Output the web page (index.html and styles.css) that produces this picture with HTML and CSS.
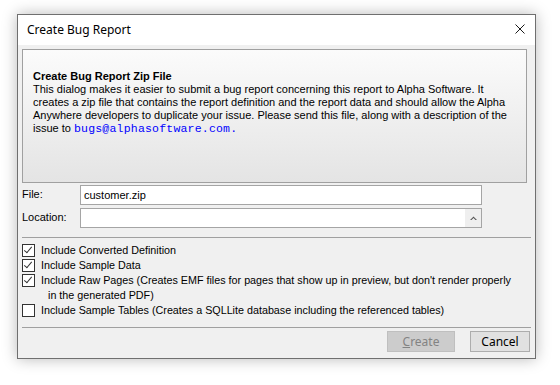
FILE: index.html
```html
<!DOCTYPE html>
<html lang="en">

<head>
  <meta charset="UTF-8">
  <title>Create Bug Report</title>
  <link rel="stylesheet" href="styles.css">
</head>

<body>
  <div class="dialog">
    <header class="titlebar">
      <span class="title">Create Bug Report</span>
      <button class="close-btn" aria-label="Close">
        <svg width="10" height="10" viewBox="0 0 10 10">
          <path d="M0.5 0.5 L9.5 9.5 M9.5 0.5 L0.5 9.5" stroke="#1a1a1a" stroke-width="1" fill="none" />
        </svg>
      </button>
    </header>

    <div class="content">
      <section class="info-panel">
        <h1 class="info-title">Create Bug Report Zip File</h1>
        <p class="info-text">
          This dialog makes it easier to submit a bug report concerning this report to Alpha Software. It<br>
          creates a zip file that contains the report definition and the report data and should allow the Alpha<br>
          Anywhere developers to duplicate your issue. Please send this file, along with a description of the<br>
          issue to <a class="mail" href="mailto:bugs@alphasoftware.com">bugs@alphasoftware.com.</a>
        </p>
      </section>

      <div class="fields">
        <label class="field-label" for="file">File:</label>
        <input class="field-input" id="file" type="text" value="customer.zip">

        <label class="field-label" for="location">Location:</label>
        <div class="field-combo">
          <input class="field-input combo-input" id="location" type="text">
          <span class="combo-btn">
            <svg width="7" height="5" viewBox="0 0 7 5">
              <path d="M0 4 L3.5 0.5 L7 4 L5.5 4 L3.5 2 L1.5 4 Z" fill="#555" />
            </svg>
          </span>
        </div>
      </div>

      <hr class="divider">

      <ul class="options">
        <li class="option">
          <span class="check checked"></span>
          <span class="option-text">Include Converted Definition</span>
        </li>
        <li class="option">
          <span class="check checked"></span>
          <span class="option-text">Include Sample Data</span>
        </li>
        <li class="option">
          <span class="check checked"></span>
          <span class="option-text">Include Raw Pages (Creates EMF files for pages that show up in preview, but don't render properly<br><span class="wrap">in the generated PDF)</span></span>
        </li>
        <li class="option">
          <span class="check"></span>
          <span class="option-text">Include Sample Tables (Creates a SQLLite database including the referenced tables)</span>
        </li>
      </ul>

      <hr class="divider">

      <div class="actions">
        <button class="btn" disabled><u>C</u>reate</button>
        <button class="btn btn-cancel">Cancel</button>
      </div>
    </div>
  </div>
</body>

</html>
```

FILE: styles.css
```css
*,
*::before,
*::after {
  box-sizing: border-box;
}

body,
h1,
p,
ul {
  margin: 0;
  padding: 0;
}

:root {
  /* COLORS */
  --window-bg: #f0f0f0;
  --border-dark: #6f6f6f;
  --border-field: #a5a5a5;
  --text-main: #000;
  --link-blue: #0000ff;

  /* FONTS */
  --ff-ui: "Liberation Sans", Arial, sans-serif;
  --ff-title: "Noto Sans", "Liberation Sans", sans-serif;
  --ff-mono: "Liberation Mono", "Courier New", monospace;
}

body {
  min-height: 385px;
  padding: 14px 0 0 17px;
  background-color: #fff;
  font-family: var(--ff-ui);
  font-size: 11px;
  color: var(--text-main);
}

.dialog {
  display: flex;
  flex-direction: column;

  width: 519px;
  height: 345px;

  border: 1px solid var(--border-dark);
  background-color: var(--window-bg);
  box-shadow: 0 0 14px rgba(0, 0, 0, 0.28);
}

/* TITLE BAR */
.titlebar {
  display: flex;
  align-items: center;
  justify-content: space-between;

  height: 30px;
  padding-left: 9px;
  padding-right: 4px;

  background-color: #fff;
}

.title {
  font-family: var(--ff-title);
  font-size: 12px;
  margin-top: -2px;
}

.close-btn {
  display: grid;
  place-items: center;

  width: 22px;
  height: 26px;
  padding: 0;
  margin-top: -2px;

  border: 0;
  background: none;
}

/* CONTENT */
.content {
  display: flex;
  flex-direction: column;
  flex: 1;

  padding: 4px 4px 0 4px;
}

.info-panel {
  height: 134px;
  width: 505px;
  padding: 20px 10px 0 10px;

  border: 1px solid #a0a0a0;
  background: linear-gradient(to bottom, #fbfbfb, #e4e4e4);
}

.info-title {
  font-size: 11px;
  font-weight: 700;
  line-height: 13px;
}

.info-text {
  line-height: 13px;
}

.mail {
  font-family: var(--ff-mono);
  font-size: 11.5px;
  letter-spacing: 0.2px;
  color: var(--link-blue);
  text-decoration: none;
}

/* FIELDS */
.fields {
  display: grid;
  grid-template-columns: 58px 402px;
  row-gap: 3px;

  margin-top: 2px;
}

.field-label {
  padding-top: 3px;
  line-height: 13px;
}

.field-input {
  height: 20px;
  width: 100%;
  padding: 0 3px;

  border: 1px solid var(--border-field);
  background: #fff;

  font-family: var(--ff-ui);
  font-size: 11px;
  color: var(--text-main);
  outline: none;
}

.field-combo {
  display: flex;
  height: 20px;
  border: 1px solid var(--border-field);
  background: #fff;
}

.combo-input {
  flex: 1;
  height: 18px;
  border: 0;
}

.combo-btn {
  display: grid;
  place-items: center;
  width: 16px;
  background: #efefef;
}

.divider {
  width: 509px;
  margin: 9px 0 0 0;
  border: 0;
  border-top: 1px solid #a0a0a0;
}

/* OPTIONS */
.options {
  display: flex;
  flex-direction: column;

  margin-top: 5px;
  list-style: none;
  font-size: 10.75px;
}

.option {
  display: flex;
  align-items: flex-start;
  gap: 6px;

  line-height: 15px;
}

.check {
  flex: none;
  position: relative;

  width: 13px;
  height: 13px;
  margin-top: 1px;

  border: 1px solid #333;
  background: #fff;
}

.check.checked::after {
  content: "";
  position: absolute;
  left: 3px;
  top: 0px;

  width: 4px;
  height: 8px;

  border: solid #333;
  border-width: 0 1px 1px 0;
  transform: rotate(40deg);
}

.wrap {
  padding-left: 7px;
}

/* ACTIONS */
.actions {
  display: flex;
  justify-content: flex-end;
  gap: 15px;

  margin-top: 3px;
  padding-right: 1px;
}

.btn {
  height: 21px;
  width: 68px;
  padding: 0;

  border: 1px solid #adadad;
  background: #e1e1e1;

  font-family: var(--ff-title);
  font-size: 12px;
  color: #000;
}

.btn:disabled {
  border-color: #bfbfbf;
  background: #cccccc;
  color: #838383;
}

.btn-cancel {
  width: 60px;
}
```
